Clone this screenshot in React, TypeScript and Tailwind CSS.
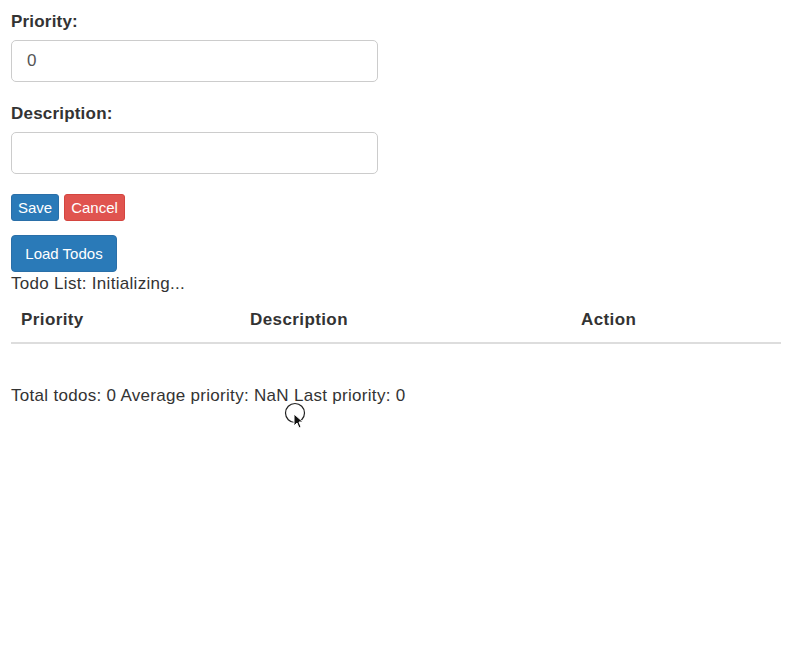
import { useState } from 'react'

export default function App() {
  const [priority, setPriority] = useState('0')
  const [description, setDescription] = useState('')

  return (
    <div className="px-[11px] pt-[12px] text-[17px] tracking-[0.3px] text-[#333] font-['Liberation_Sans',Arial,sans-serif] relative min-h-[660px] bg-white">
      <label className="block font-bold leading-[20px] mb-[8px] tracking-[0.2px]">Priority:</label>
      <input
        value={priority}
        onChange={(e) => setPriority(e.target.value)}
        className="block w-[367px] h-[42px] px-[15px] border border-[#ccc] rounded-[5px] text-[17px] text-[#555] outline-none"
      />
      <label className="block font-bold leading-[20px] mt-[22px] mb-[8px] tracking-[0.2px]">Description:</label>
      <input
        value={description}
        onChange={(e) => setDescription(e.target.value)}
        className="block w-[367px] h-[42px] px-[15px] border border-[#ccc] rounded-[5px] text-[17px] text-[#555] outline-none"
      />
      <div className="flex gap-[5px] mt-[20px]">
        <button className="h-[27px] w-[48px] rounded-[3px] bg-[#2a7ab8] border border-[#2a6fa8] text-white text-[15px] tracking-normal leading-none">
          Save
        </button>
        <button className="h-[27px] w-[61px] rounded-[3px] bg-[#e0544f] border border-[#d4453f] text-white text-[15px] tracking-normal leading-none">
          Cancel
        </button>
      </div>
      <button className="mt-[14px] h-[37px] w-[106px] rounded-[4px] bg-[#2a7ab8] border border-[#2a6fa8] text-white text-[15px] tracking-normal leading-none">
        Load Todos
      </button>
      <div className="leading-[20px] mt-[2px]">Todo List: Initializing...</div>
      <table className="w-[770px] mt-[4px] border-collapse">
        <thead>
          <tr className="border-b-2 border-[#ddd]">
            <th className="w-[229px] text-left font-bold px-[10px] py-[12px] leading-[20px] tracking-[0.4px]">Priority</th>
            <th className="w-[331px] text-left font-bold px-[10px] py-[12px] leading-[20px] tracking-[0.4px]">Description</th>
            <th className="text-left font-bold px-[10px] py-[12px] leading-[20px] tracking-[0.4px]">Action</th>
          </tr>
        </thead>
        <tbody></tbody>
      </table>
      <div className="leading-[20px] mt-[42px]">Total todos: 0 Average priority: NaN Last priority: 0</div>
      <svg className="absolute left-[284px] top-[402px]" width="24" height="30" viewBox="0 0 24 30">
        <circle cx="11" cy="11" r="9.5" fill="none" stroke="#222" strokeWidth="1.2" />
        <path d="M10 12 L10 24 L13 21 L15 26 L17 25 L15 20 L19 20 Z" fill="#111" stroke="#fff" strokeWidth="1" />
      </svg>
    </div>
  )
}
